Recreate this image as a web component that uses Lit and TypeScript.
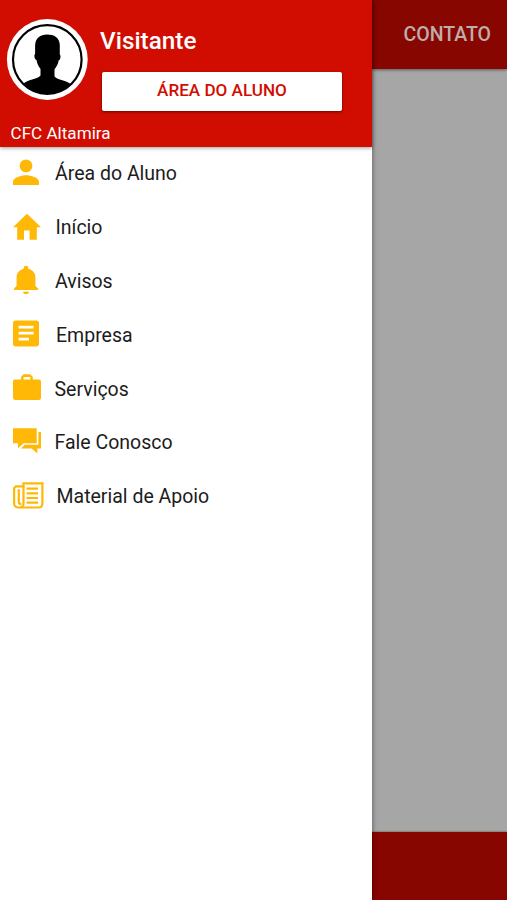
import { LitElement, html, svg, css } from "lit";
import { customElement } from "lit/decorators.js";

const items = [
  { label: "Área do Aluno", x: 55, icon: svg`<path d="M14 14.3a6.4 6.4 0 1 0 0-12.8 6.4 6.4 0 0 0 0 12.8ZM14 17.2c-4.6 0-13 2.2-13 6.6v3.2h26v-3.2c0-4.4-8.4-6.6-13-6.6Z"/>` },
  { label: "Início", x: 55.5, icon: svg`<path d="M12 27.7v-9.2h5.6v9.2h7.2V15.2H29L15 1.8 1 15.2h4.2v12.5Z"/>` },
  { label: "Avisos", x: 55, icon: svg`<path d="M14 29.2c1.7 0 2.9-.9 3-2.4h-6c.1 1.500 1.300 2.400 3 2.400ZM23.400 20.900V12.300c0-4.400-2.900-7.600-7.100-8.600V3a2.200 2.200 0 0 0-4.600 0v.7C7.500 4.700 4.600 7.900 4.600 12.300v8.600L2 23.500V25h24.200v-1.500Z"/>` },
  { label: "Empresa", x: 56, icon: svg`<path fill-rule="evenodd" d="M3.700 1.500h20.600A2.700 2.700 0 0 1 27 4.200v20.600a2.700 2.700 0 0 1-2.700 2.700H3.700A2.700 2.700 0 0 1 1 24.800V4.200a2.700 2.700 0 0 1 2.700-2.700ZM6.600 6.800v2.700h15V6.800Zm0 6v2.700h15v-2.700Zm0 6v2.700h10.400v-2.700Z"/>` },
  { label: "Serviços", x: 54.5, icon: svg`<path fill-rule="evenodd" d="M20.800 6.500V4L18.300 1.300h-6.700L9 4v2.500H3A2 2 0 0 0 1 8.500v16.300A2.200 2.200 0 0 0 3.200 27h23.600a2.200 2.200 0 0 0 2.200-2.200V8.500a2 2 0 0 0-2-2Zm-2.500 0h-6.700V4h6.700Z"/>` },
  { label: "Fale Conosco", x: 54.5, icon: svg`<path d="M1 1.200h23.700v15H11.500L6 21.300v-5H1Z"/><path d="M26.400 5H29v16.400h-3.700v5l-5.600-5H9l3.800-3.600h13.600Z"/>` },
  { label: "Material de Apoio", x: 56.500, icon: svg`<g fill="none" stroke="currentColor" stroke-width="2.200"><path d="M11.500 2.300h18.900v20.800a3.400 3.400 0 0 1-3.400 3.400H5.800A3.900 3.900 0 0 1 2.100 22.600V7.200L4 5.300h7.500Z"/><path d="M11.500 5v18a3.300 3.300 0 0 1-3.300 3.300M6.800 8.200v12.600c0 1.700 1 2.300 2.600 2.300"/><path d="M14.500 7.600h11.500M14.500 12.300h11.500M14.500 17h11.500M14.500 21.700h11.500"/></g>` },
];

@customElement("app-root")
export class AppRoot extends LitElement {
  static styles = css`
    :host { display: block; width: 507px; height: 900px; overflow: hidden; font-family: Roboto, sans-serif; }
    .screen { display: grid; grid-template-columns: 372.400px 1fr; height: 900px; background: #a6a6a6; }
    .drawer { background: #fff; position: relative; z-index: 1; box-shadow: 0 0 5px rgba(0, 0, 0, .5); }
    .head { height: 147px; box-sizing: border-box; background: #d10d02; color: #fff; box-shadow: 0 1px 4px rgba(0, 0, 0, .4); display: grid; grid-template-columns: 95px 1fr; grid-template-rows: 119px 28px; }
    .avatar { width: 82px; height: 82px; margin: 18px 0 0 6px; display: block; }
    .name { font-size: 24.300px; font-weight: 500; line-height: 28px; margin: 27px 0 17px 5px; }
    .button { width: 240px; height: 39px; margin-left: 7px; padding: 0 0 2px; border: 0; border-radius: 2px; background: #fff; color: #d10d02; font: 500 17.100px/37px Roboto, sans-serif; box-shadow: 0 1px 3px rgba(0, 0, 0, .5); display: block; }
    .org { grid-column: 1 / 3; font-size: 17.100px; line-height: 20px; margin: 4px 0 0 10.500px; }
    .row { height: 53.800px; display: flex; align-items: center; color: #ffb805; }
    .glyph { width: 32px; height: 32px; margin-left: 12px; fill: currentColor; flex: none; }
    .label { font-size: 19.500px; line-height: 24px; padding-top: 1px; color: #1c1c1c; white-space: nowrap; }
    .page { display: flex; flex-direction: column; justify-content: space-between; }
    .bar { height: 69px; box-sizing: border-box; background: #870600; color: #beaead; font-size: 19.500px; font-weight: 500; line-height: 69px; text-align: right; padding-right: 16px; box-shadow: 0 1px 3px rgba(0, 0, 0, .45); }
    .foot { height: 68px; background: #870600; box-shadow: 0 -1px 1px rgba(110, 80, 50, .35); }
  `;

  render() {
    return html`<div class="screen">
      <aside class="drawer">
        <header class="head">
          <svg class="avatar" viewBox="0 0 82 82">
            <defs><clipPath id="disc"><circle cx="41.300" cy="41.500" r="34.500" /></clipPath></defs>
            <circle cx="41.300" cy="41.500" r="40.400" fill="#fff" />
            <circle cx="41.300" cy="41.500" r="34.300" fill="#fff" stroke="#000" stroke-width="2.200" />
            <path clip-path="url(#disc)" d="M41 16.500c7 0 12.800 3 12.800 11v9c1.300.8.800 5.500-1.200 6-.7 4.800-2.600 6.500-4.100 9v7c4.500 4.500 12.500 3.500 17.500 8.500L62 80H20l-3-14c5-5 13.500-4 17.500-8.500V51c-1.600-2.500-3.300-4.500-4-9-2.200-.5-2.700-5.200-1.400-6v-8c0-8 5.400-11.500 11.900-11.500Z" />
          </svg>
          <div>
            <div class="name">Visitante</div>
            <button class="button">ÁREA DO ALUNO</button>
          </div>
          <div class="org">CFC Altamira</div>
        </header>
        <nav>
          ${items.map((i) => html`<div class="row">
            <svg class="glyph" viewBox="0 0 32 32">${i.icon}</svg>
            <span class="label" style="margin-left:${i.x - 44}px">${i.label}</span>
          </div>`)}
        </nav>
      </aside>
      <main class="page">
        <div class="bar">CONTATO</div>
        <div class="foot"></div>
      </main>
    </div>`;
  }
}
